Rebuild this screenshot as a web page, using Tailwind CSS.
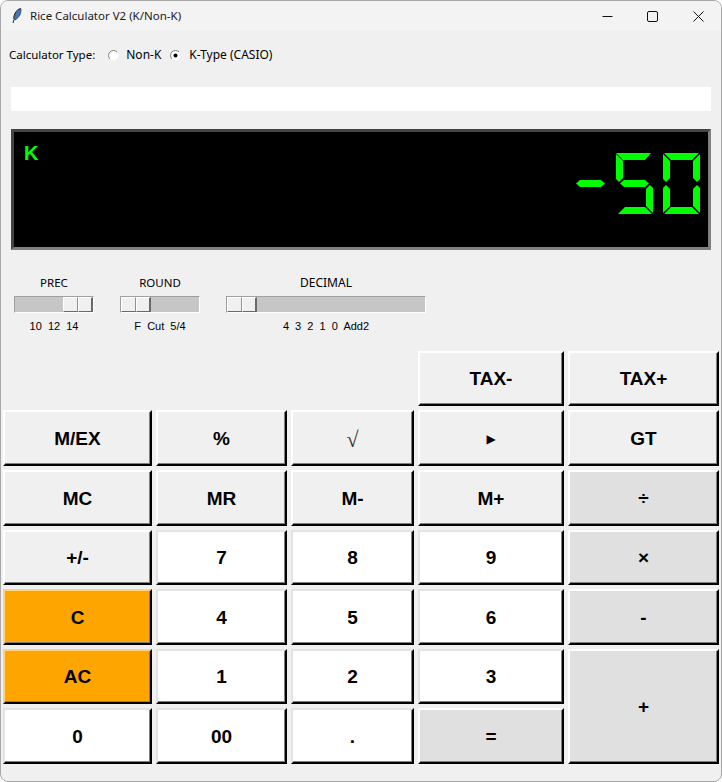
<!DOCTYPE html>
<html lang="en">
<head>
    <meta charset="UTF-8">
    <title>Rice Calculator V2 (K/Non-K)</title>
    <script src="https://cdn.jsdelivr.net/npm/@tailwindcss/browser@4"></script>
</head>
<body class="bg-white">
    <div class="w-[722px] h-[782px] overflow-hidden rounded-lg border border-[#a8a8a8] bg-[#f0f0f0] font-['Noto_Sans',sans-serif] text-[12px] text-black">

        <!-- title bar -->
        <div class="h-[30px] bg-[#f3f3f3] flex items-center">
            <svg class="ml-[11px] w-[10px] h-[16px]" viewBox="0 0 10 16">
                <path d="M8.5 0.5 C5 1.5 2.5 4.5 1.8 9 L2 11.5 L1 15" fill="none" stroke="#1a2a44" stroke-width="1"/>
                <path d="M8.8 0.5 C9.5 4 8 9 3 12 C1.5 9 3 3.5 8.8 0.5 Z" fill="#3f78c4" stroke="#16294a" stroke-width="0.7"/>
            </svg>
            <span class="ml-[8px] text-[11.5px] text-[#1a1a1a]">Rice Calculator V2 (K/Non-K)</span>
            <div class="ml-auto flex items-center">
                <svg class="w-[11px] h-[11px] mr-[34px]" viewBox="0 0 11 11"><path d="M0.5 5.5H10.5" stroke="#111" stroke-width="1"/></svg>
                <svg class="w-[11px] h-[11px] mr-[35px]" viewBox="0 0 11 11"><rect x="0.5" y="0.5" width="10" height="10" rx="1.5" fill="none" stroke="#111" stroke-width="1"/></svg>
                <svg class="w-[11px] h-[11px] mr-[17px]" viewBox="0 0 11 11"><path d="M0.5 0.5L10.5 10.5M10.5 0.5L0.5 10.5" stroke="#111" stroke-width="1"/></svg>
            </div>
        </div>

        <!-- calculator type -->
        <div class="h-[48px] pl-[8px] flex items-center">
            <span class="text-[11.5px]">Calculator Type:</span>
            <svg class="ml-[12px] w-[13px] h-[13px]" viewBox="0 0 13 13">
                <circle cx="6.5" cy="6.5" r="5" fill="#fff"/>
                <path d="M2.96 10.04A5 5 0 0 1 10.04 2.96" fill="none" stroke="#808080" stroke-width="1"/>
            </svg>
            <span class="ml-[6px]">Non-K</span>
            <svg class="ml-[8px] w-[13px] h-[13px]" viewBox="0 0 13 13">
                <circle cx="6.5" cy="6.5" r="5" fill="#fff"/>
                <path d="M2.96 10.04A5 5 0 0 1 10.04 2.96" fill="none" stroke="#808080" stroke-width="1"/>
                <circle cx="6.5" cy="6.5" r="2" fill="#000"/>
            </svg>
            <span class="ml-[7px]">K-Type (CASIO)</span>
        </div>

        <!-- entry -->
        <div class="ml-[10px] mt-[8px] w-[700px] h-[24px] bg-white"></div>

        <!-- display -->
        <div class="ml-[10px] mt-[18px] w-[700px] h-[121px] bg-black border-[3px] border-t-[#444444] border-l-[#444444] border-r-[#808080] border-b-[#808080] flex justify-between">
            <span class="ml-[10px] mt-[10px] h-[22px] leading-[22px] font-['Liberation_Sans',sans-serif] font-bold text-[20px] text-[#00ff00]">K</span>
            <svg class="mt-[21px] mr-[8px] w-[124px] h-[61px]" viewBox="576 153 124 61" fill="#00ff00">
                <polygon points="576,183.5 580,180 601,180 605,183.5 601,187 580,187"/>
                <polygon points="616,153 651,153 645,160 623,160"/>
                <polygon points="616,154 623,161 623,178 619,182 616,179"/>
                <polygon points="620,183.5 624,180 645,180 649,183.5 645,187 624,187"/>
                <polygon points="646,189 650,185 653,188 653,213 646,206"/>
                <polygon points="618,214 625,207 645,207 652,214"/>
                <polygon points="664,153 699,153 692,160 671,160"/>
                <polygon points="663,154 670,161 670,178 666,182 663,179"/>
                <polygon points="700,154 700,179 697,182 693,178 693,161"/>
                <polygon points="663,188 666,185 670,189 670,206 663,213"/>
                <polygon points="693,189 697,185 700,188 700,213 693,206"/>
                <polygon points="664,214 671,207 692,207 699,214"/>
            </svg>
        </div>

        <!-- sliders -->
        <div class="ml-[13px] mt-[26px] flex gap-[26px]">
            <div class="w-[80px] flex flex-col items-center">
                <span class="h-[20px] leading-[14px] text-[11.5px]">PREC</span>
                <div class="w-full h-[17px] bg-[#c6c6c6] border border-t-[#a0a0a0] border-l-[#a0a0a0] border-r-white border-b-white flex justify-end">
                    <div class="w-[15px] bg-[#f0f0f0] border border-t-white border-l-white border-r-[#909090] border-b-[#696969]"></div>
                    <div class="w-[15px] bg-[#f0f0f0] border-t border-l border-r-2 border-b border-t-white border-l-white border-r-[#696969] border-b-[#696969]"></div>
                </div>
                <span class="mt-[7px] font-['Liberation_Sans',sans-serif] text-[11px] leading-[13px] whitespace-pre">10  12  14</span>
            </div>
            <div class="w-[80px] flex flex-col items-center">
                <span class="h-[20px] leading-[14px] text-[11.5px]">ROUND</span>
                <div class="w-full h-[17px] bg-[#c6c6c6] border border-t-[#a0a0a0] border-l-[#a0a0a0] border-r-white border-b-white flex">
                    <div class="w-[15px] bg-[#f0f0f0] border border-t-white border-l-white border-r-[#909090] border-b-[#696969]"></div>
                    <div class="w-[15px] bg-[#f0f0f0] border-t border-l border-r-2 border-b border-t-white border-l-white border-r-[#696969] border-b-[#696969]"></div>
                </div>
                <span class="mt-[7px] font-['Liberation_Sans',sans-serif] text-[11px] leading-[13px] whitespace-pre">F  Cut  5/4</span>
            </div>
            <div class="w-[200px] flex flex-col items-center">
                <span class="h-[20px] leading-[14px]">DECIMAL</span>
                <div class="w-full h-[17px] bg-[#c6c6c6] border border-t-[#a0a0a0] border-l-[#a0a0a0] border-r-white border-b-white flex">
                    <div class="w-[15px] bg-[#f0f0f0] border border-t-white border-l-white border-r-[#909090] border-b-[#696969]"></div>
                    <div class="w-[15px] bg-[#f0f0f0] border-t border-l border-r-2 border-b border-t-white border-l-white border-r-[#696969] border-b-[#696969]"></div>
                </div>
                <span class="mt-[7px] font-['Liberation_Sans',sans-serif] text-[11px] leading-[13px] whitespace-pre">4  3  2  1  0  Add2</span>
            </div>
        </div>

        <!-- keypad -->
        <div class="ml-[2px] mt-[18px] w-[716px] h-[413px] grid grid-cols-[149px_131px_123px_146px_151px] grid-rows-[55px_56px_56px_55px_56px_55px_56px] gap-[4px] font-['Liberation_Sans',sans-serif] font-bold text-[19px] [&>button]:pt-[2px]">
            <button class="col-start-4 bg-[#f0f0f0] border-2 border-t-white border-l-white border-r-black border-b-black shadow-[inset_-1px_-1px_0_#808080]">TAX-</button>
            <button class="bg-[#f0f0f0] border-2 border-t-white border-l-white border-r-black border-b-black shadow-[inset_-1px_-1px_0_#808080]">TAX+</button>

            <button class="bg-[#f0f0f0] border-2 border-t-white border-l-white border-r-black border-b-black shadow-[inset_-1px_-1px_0_#808080]">M/EX</button>
            <button class="bg-[#f0f0f0] border-2 border-t-white border-l-white border-r-black border-b-black shadow-[inset_-1px_-1px_0_#808080]">%</button>
            <button class="bg-[#f0f0f0] border-2 border-t-white border-l-white border-r-black border-b-black shadow-[inset_-1px_-1px_0_#808080] font-['Liberation_Serif',serif] font-normal text-[22px] text-[#333333]">√</button>
            <button class="bg-[#f0f0f0] border-2 border-t-white border-l-white border-r-black border-b-black shadow-[inset_-1px_-1px_0_#808080] font-['DejaVu_Sans',sans-serif] text-[12px]">▶</button>
            <button class="bg-[#f0f0f0] border-2 border-t-white border-l-white border-r-black border-b-black shadow-[inset_-1px_-1px_0_#808080]">GT</button>

            <button class="bg-[#f0f0f0] border-2 border-t-white border-l-white border-r-black border-b-black shadow-[inset_-1px_-1px_0_#808080]">MC</button>
            <button class="bg-[#f0f0f0] border-2 border-t-white border-l-white border-r-black border-b-black shadow-[inset_-1px_-1px_0_#808080]">MR</button>
            <button class="bg-[#f0f0f0] border-2 border-t-white border-l-white border-r-black border-b-black shadow-[inset_-1px_-1px_0_#808080]">M-</button>
            <button class="bg-[#f0f0f0] border-2 border-t-white border-l-white border-r-black border-b-black shadow-[inset_-1px_-1px_0_#808080]">M+</button>
            <button class="bg-[#e0e0e0] border-2 border-t-white border-l-white border-r-black border-b-black shadow-[inset_-1px_-1px_0_#808080]">÷</button>

            <button class="bg-[#f0f0f0] border-2 border-t-white border-l-white border-r-black border-b-black shadow-[inset_-1px_-1px_0_#808080]">+/-</button>
            <button class="bg-white border-2 border-t-[#e3e3e3] border-l-[#e3e3e3] border-r-black border-b-black shadow-[inset_-1px_-1px_0_#808080]">7</button>
            <button class="bg-white border-2 border-t-[#e3e3e3] border-l-[#e3e3e3] border-r-black border-b-black shadow-[inset_-1px_-1px_0_#808080]">8</button>
            <button class="bg-white border-2 border-t-[#e3e3e3] border-l-[#e3e3e3] border-r-black border-b-black shadow-[inset_-1px_-1px_0_#808080]">9</button>
            <button class="bg-[#e0e0e0] border-2 border-t-white border-l-white border-r-black border-b-black shadow-[inset_-1px_-1px_0_#808080]">×</button>

            <button class="bg-[#ffa500] border-2 border-t-[#ffd27f] border-l-[#ffd27f] border-r-black border-b-black shadow-[inset_-1px_-1px_0_#808080]">C</button>
            <button class="bg-white border-2 border-t-[#e3e3e3] border-l-[#e3e3e3] border-r-black border-b-black shadow-[inset_-1px_-1px_0_#808080]">4</button>
            <button class="bg-white border-2 border-t-[#e3e3e3] border-l-[#e3e3e3] border-r-black border-b-black shadow-[inset_-1px_-1px_0_#808080]">5</button>
            <button class="bg-white border-2 border-t-[#e3e3e3] border-l-[#e3e3e3] border-r-black border-b-black shadow-[inset_-1px_-1px_0_#808080]">6</button>
            <button class="bg-[#e0e0e0] border-2 border-t-white border-l-white border-r-black border-b-black shadow-[inset_-1px_-1px_0_#808080]">-</button>

            <button class="bg-[#ffa500] border-2 border-t-[#ffd27f] border-l-[#ffd27f] border-r-black border-b-black shadow-[inset_-1px_-1px_0_#808080]">AC</button>
            <button class="bg-white border-2 border-t-[#e3e3e3] border-l-[#e3e3e3] border-r-black border-b-black shadow-[inset_-1px_-1px_0_#808080]">1</button>
            <button class="bg-white border-2 border-t-[#e3e3e3] border-l-[#e3e3e3] border-r-black border-b-black shadow-[inset_-1px_-1px_0_#808080]">2</button>
            <button class="bg-white border-2 border-t-[#e3e3e3] border-l-[#e3e3e3] border-r-black border-b-black shadow-[inset_-1px_-1px_0_#808080]">3</button>
            <button class="row-span-2 bg-[#e0e0e0] border-2 border-t-white border-l-white border-r-black border-b-black shadow-[inset_-1px_-1px_0_#808080]">+</button>

            <button class="bg-white border-2 border-t-[#e3e3e3] border-l-[#e3e3e3] border-r-black border-b-black shadow-[inset_-1px_-1px_0_#808080]">0</button>
            <button class="bg-white border-2 border-t-[#e3e3e3] border-l-[#e3e3e3] border-r-black border-b-black shadow-[inset_-1px_-1px_0_#808080]">00</button>
            <button class="bg-white border-2 border-t-[#e3e3e3] border-l-[#e3e3e3] border-r-black border-b-black shadow-[inset_-1px_-1px_0_#808080]">.</button>
            <button class="bg-[#e0e0e0] border-2 border-t-white border-l-white border-r-black border-b-black shadow-[inset_-1px_-1px_0_#808080]">=</button>
        </div>
    </div>
</body>
</html>
